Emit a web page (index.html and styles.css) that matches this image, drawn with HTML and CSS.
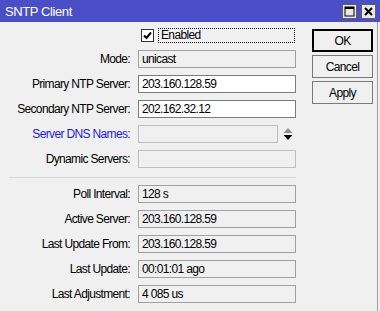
FILE: index.html
```
<!DOCTYPE html>
<html lang="en">
<head>
  <meta charset="UTF-8">
  <title>SNTP Client</title>
  <link rel="stylesheet" href="styles.css">
</head>
<body>
  <div class="window">
    <div class="titlebar">
      <span class="title">SNTP Client</span>
      <div class="wbtns">
        <span class="wbtn">
          <svg width="11" height="11" viewBox="0 0 11 11"><rect x="1" y="1" width="9" height="9" fill="none" stroke="#000" stroke-width="1"/><line x1="1" y1="2" x2="10" y2="2" stroke="#000" stroke-width="2"/></svg>
        </span>
        <span class="wbtn">
          <svg width="11" height="11" viewBox="0 0 11 11"><path d="M2 2 L9 9 M9 2 L2 9" stroke="#000" stroke-width="2"/></svg>
        </span>
      </div>
    </div>

    <div class="content">
      <div class="form">
        <div class="row row-check">
          <div class="label"></div>
          <div class="check-focus">
            <span class="checkbox">
              <svg width="11" height="11" viewBox="0 0 11 11"><path d="M2 5.5 L4.5 8 L9 2.5" fill="none" stroke="#000" stroke-width="2"/></svg>
            </span>
            <span>Enabled</span>
          </div>
        </div>
        <div class="row">
          <div class="label">Mode:</div>
          <div class="field readonly">unicast</div>
        </div>
        <div class="row">
          <div class="label">Primary NTP Server:</div>
          <div class="field edit">203.160.128.59</div>
        </div>
        <div class="row">
          <div class="label">Secondary NTP Server:</div>
          <div class="field edit">202.162.32.12</div>
        </div>
        <div class="row">
          <div class="label link">Server DNS Names:</div>
          <div class="field disabled short"></div>
          <span class="spinner">
            <svg width="10" height="13" viewBox="0 0 10 13"><path d="M5 0 L9.5 5 L0.5 5 Z" fill="#909090"/><path d="M0.5 7 L9.5 7 L5 12 Z" fill="#000"/></svg>
          </span>
        </div>
        <div class="row">
          <div class="label">Dynamic Servers:</div>
          <div class="field disabled"></div>
        </div>
        <div class="separator"></div>
        <div class="row">
          <div class="label">Poll Interval:</div>
          <div class="field readonly">128 s</div>
        </div>
        <div class="row">
          <div class="label">Active Server:</div>
          <div class="field readonly">203.160.128.59</div>
        </div>
        <div class="row">
          <div class="label">Last Update From:</div>
          <div class="field readonly">203.160.128.59</div>
        </div>
        <div class="row">
          <div class="label">Last Update:</div>
          <div class="field readonly">00:01:01 ago</div>
        </div>
        <div class="row">
          <div class="label">Last Adjustment:</div>
          <div class="field readonly">4 085 us</div>
        </div>
      </div>

      <div class="actions">
        <button class="btn default">OK</button>
        <button class="btn">Cancel</button>
        <button class="btn">Apply</button>
      </div>
    </div>
  </div>
</body>
</html>
```

FILE: styles.css
```
body {
  margin: 0;
  padding: 0;
  background: #f0f0f0;
  font-family: 'Liberation Sans', Arial, sans-serif;
  font-size: 12px;
  letter-spacing: -0.65px;
  color: #000;
}
.window {
  width: 380px;
  height: 311px;
  overflow: hidden;
}
.titlebar {
  height: 22px;
  background: #4a4fc8;
  display: flex;
  align-items: center;
  justify-content: space-between;
  padding: 0 4px 0 5px;
}
.title {
  color: #fff;
  font-size: 13px;
  letter-spacing: -0.4px;
  padding-top: 1px;
}
.wbtns {
  display: flex;
  gap: 4px;
}
.wbtn {
  width: 13px;
  height: 13px;
  border: 1px solid #606060;
  background: #e8e8e8;
  display: flex;
  align-items: center;
  justify-content: center;
}
.content {
  display: flex;
  width: 377px;
  height: 289px;
  border-right: 1px solid #a0a0a0;
}
.form {
  display: flex;
  flex-direction: column;
  gap: 7px;
  padding-top: 6px;
}
.row {
  display: flex;
  align-items: center;
  height: 18px;
}
.row-check {
  height: 15px;
}
.label {
  width: 130px;
  text-align: right;
  line-height: 18px;
  white-space: nowrap;
}
.label.link {
  color: #1a1ae6;
}
.field {
  width: 158px;
  height: 18px;
  box-sizing: border-box;
  margin-left: 8px;
  padding-left: 3px;
  line-height: 16px;
  white-space: nowrap;
}
.field.edit {
  background: #fff;
  border: 1px solid #7a7a7a;
}
.field.readonly {
  background: #f0f0f0;
  border: 1px solid #a0a0a0;
}
.field.disabled {
  background: #f0f0f0;
  border: 1px solid #c0c0c0;
}
.field.short {
  width: 140px;
}
.spinner {
  display: flex;
  margin-left: 5px;
}
.check-focus {
  display: flex;
  align-items: center;
  gap: 4px;
  margin-left: 8px;
  width: 158px;
  height: 15px;
  box-sizing: border-box;
  padding-left: 2px;
  border: 1px dotted transparent;
}
.check-focus span:last-child {
  flex: 1;
  height: 15px;
  line-height: 13px;
  box-sizing: border-box;
  border: 1px dotted #000;
  padding-left: 2px;
}
.checkbox {
  width: 13px;
  height: 13px;
  box-sizing: border-box;
  border: 1px solid #333;
  background: #fff;
  display: flex;
  align-items: center;
  justify-content: center;
}
.separator {
  height: 1px;
  width: 287px;
  margin: 2px 0 0 9px;
  background: #d8d8d8;
}
.actions {
  display: flex;
  flex-direction: column;
  gap: 3px;
  margin-left: 16px;
  padding-top: 7px;
}
.btn {
  width: 61px;
  height: 23px;
  font-family: 'Liberation Sans', Arial, sans-serif;
  font-size: 12px;
  letter-spacing: -0.65px;
  background: #f0f0f0;
  border: 1px solid #7a7a7a;
  padding: 0;
  color: #000;
}
.btn.default {
  border: 1px solid #000;
  box-shadow: inset 0 0 0 1px #000;
}
```
